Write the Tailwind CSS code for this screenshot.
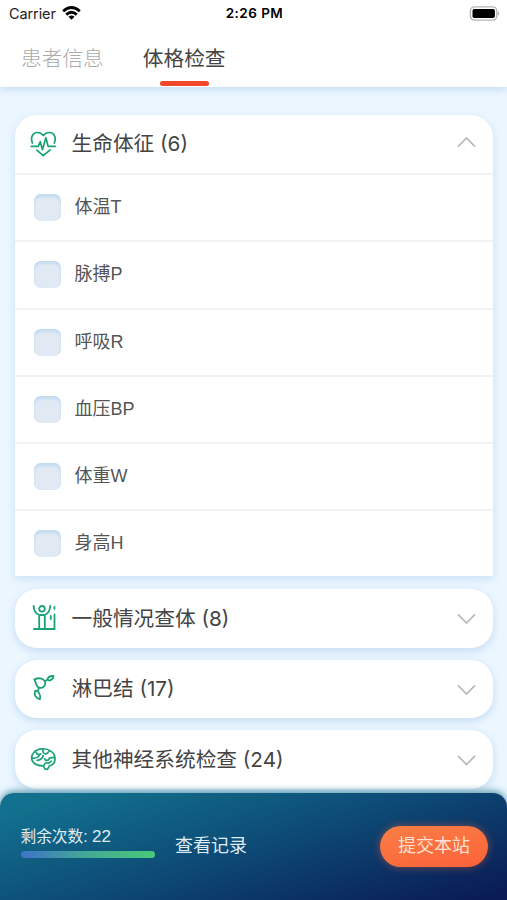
<!DOCTYPE html>
<html lang="zh-CN">
<head>
<meta charset="utf-8">
<title>体格检查</title>
<script src="https://cdn.jsdelivr.net/npm/@tailwindcss/browser@4"></script>
</head>
<body class="bg-[#ebf6ff] font-['Liberation_Sans','Noto_Sans_CJK_SC',sans-serif]">
<div class="relative flex h-[900px] w-[507px] flex-col overflow-hidden bg-[#ebf6ff] text-[#444]">
  <header class="h-[87px] shrink-0 bg-white shadow-[0_3px_7px_#c8def2]">
    <div class="grid h-7 grid-cols-3 items-center pl-[9px] pr-[7px] font-['Inter',sans-serif] text-black">
      <div class="flex items-center gap-[6px] text-[14.5px] leading-none tracking-[-0.1px] text-[#222]">
        <span>Carrier</span>
        <svg class="h-[14px] w-[19px] -translate-y-px" viewBox="0 0 19 14" fill="none" stroke="#000" stroke-width="2.8"><path d="M1.2 5.2Q9.5-2.2 17.8 5.2M4.2 8.6Q9.5 4 14.8 8.6"/><path d="M6.5 10.7Q9.5 8.2 12.5 10.7L9.5 13.7Z" fill="#000" stroke="none"/></svg>
      </div>
      <span class="text-center text-[13.5px] font-semibold leading-none tracking-[0.45px]">2:26 PM</span>
      <svg class="h-[15px] w-[31px] -translate-y-px justify-self-end" viewBox="0 0 31 15"><rect x="1.4" y=".9" width="26.4" height="13.2" rx="4" fill="none" stroke="#b5b5b5" stroke-width="1.4"/><rect x="3.5" y="3" width="22.4" height="9" rx="1.8"/><path d="M29 5.2Q31.4 7.5 29 9.8Z" fill="#aaa"/></svg>
    </div>
    <nav class="flex gap-[39px] pl-[21px] text-[20.7px] font-light">
      <div class="flex h-[58px] flex-col items-center pt-[16px] leading-[30px] text-[#aaa]">患者信息</div>
      <div class="flex h-[58px] flex-col items-center pt-[16px] font-normal leading-[30px] text-[#444]">
        <span>体格检查</span>
        <span class="mt-[7px] h-[5px] w-[49px] rounded-full bg-[#f2472b]"></span>
      </div>
    </nav>
  </header>

  <main class="flex flex-col gap-3 px-[14.5px] pt-[28px] text-[20.7px]">
    <section class="h-[461px] shrink-0 rounded-t-[22px] bg-white shadow-[0_3px_8px_#cbe1f6]">
      <div class="flex h-[58px] items-center pl-[15.5px] pr-[17px]">
        <svg class="h-[27px] w-[27px]" viewBox="0 0 27 27" fill="none" stroke="#19a277" stroke-width="1.7" stroke-linejoin="round" stroke-linecap="round"><path d="M2.4 12C-.2 5.3 3.7 1.5 7.5 1.5c2.8 0 4.3 1 5.8 3 1.7-2 3.3-3 6-3C23.3 1.5 27 5.5 24.3 12M1.2 15.3h7l2.1-4.7 2.1 8.1 3.5-12 2.2 8.6h7.2M6.8 19.2l6.4 5.4 7-5.8"/></svg>
        <h2 class="ml-[14.5px] flex-1 font-['Inter','Noto_Sans_CJK_SC',sans-serif]">生命体征 (6)</h2>
        <svg class="h-[12px] w-[19px] -translate-y-[2px]" viewBox="0 0 19 12" fill="none" stroke="#b9b9b9" stroke-width="1.7"><path d="M1 10.6 9.5 2 18 10.6"/></svg>
      </div>
      <ul class="text-[18px] text-[#555]">
        <li class="flex h-[67.3px] items-center gap-[14px] border-t-2 border-[#f3f3f3] pl-[19px]"><i class="h-[27px] w-[27px] rounded-[7px] bg-[#e1eaf4] shadow-[inset_0_3px_3px_#c3dbf1,inset_0_0_2px_#d8e6f4]"></i><span>体温T</span></li>
        <li class="flex h-[67.3px] items-center gap-[14px] border-t-2 border-[#f3f3f3] pl-[19px]"><i class="h-[27px] w-[27px] rounded-[7px] bg-[#e1eaf4] shadow-[inset_0_3px_3px_#c3dbf1,inset_0_0_2px_#d8e6f4]"></i><span>脉搏P</span></li>
        <li class="flex h-[67.3px] items-center gap-[14px] border-t-2 border-[#f3f3f3] pl-[19px]"><i class="h-[27px] w-[27px] rounded-[7px] bg-[#e1eaf4] shadow-[inset_0_3px_3px_#c3dbf1,inset_0_0_2px_#d8e6f4]"></i><span>呼吸R</span></li>
        <li class="flex h-[67.3px] items-center gap-[14px] border-t-2 border-[#f3f3f3] pl-[19px]"><i class="h-[27px] w-[27px] rounded-[7px] bg-[#e1eaf4] shadow-[inset_0_3px_3px_#c3dbf1,inset_0_0_2px_#d8e6f4]"></i><span>血压BP</span></li>
        <li class="flex h-[67.3px] items-center gap-[14px] border-t-2 border-[#f3f3f3] pl-[19px]"><i class="h-[27px] w-[27px] rounded-[7px] bg-[#e1eaf4] shadow-[inset_0_3px_3px_#c3dbf1,inset_0_0_2px_#d8e6f4]"></i><span>体重W</span></li>
        <li class="flex h-[66.5px] items-center gap-[14px] border-t-2 border-[#f3f3f3] pl-[19px]"><i class="h-[27px] w-[27px] rounded-[7px] bg-[#e1eaf4] shadow-[inset_0_3px_3px_#c3dbf1,inset_0_0_2px_#d8e6f4]"></i><span>身高H</span></li>
      </ul>
    </section>

    <section class="mt-px flex h-[58.5px] shrink-0 items-center rounded-[22px] bg-white pl-[15.5px] pr-[17px] shadow-[0_3px_8px_#c5dcf3]">
      <svg class="h-[27px] w-[27px] -translate-y-px" viewBox="0 0 27 27" fill="none" stroke="#19a277" stroke-width="1.8" stroke-linecap="round"><circle cx="12" cy="4.8" r="2.8"/><path d="M3.6 1.8c.2 5.2 2 8 5.6 9.2h5.6c3.4-1.2 5.2-4 5.4-9.2M9.2 11v14M14.8 11v14M4 25h20.5V10.5M24.4 2.8v2M20.8 12v3"/></svg>
      <h2 class="ml-[14.5px] flex-1 font-['Inter','Noto_Sans_CJK_SC',sans-serif]">一般情况查体 (8)</h2>
      <svg class="h-[12px] w-[19px] translate-y-px" viewBox="0 0 19 12" fill="none" stroke="#b9b9b9" stroke-width="1.7"><path d="M1 1.4 9.5 10 18 1.4"/></svg>
    </section>

    <section class="flex h-[58.5px] shrink-0 items-center rounded-[22px] bg-white pl-[15.5px] pr-[17px] shadow-[0_3px_8px_#c5dcf3]">
      <svg class="h-[27px] w-[27px] -translate-y-px" viewBox="0 0 27 27" fill="none" stroke="#19a277" stroke-width="1.8" stroke-linejoin="round"><path d="M4.4 5.4c2.8-1.2 6.6-1.6 8.9.2 2 1.6 2.4 4.2 1.2 6.2-1.4 2.4-4.5 2.8-6.6 1.2C5.7 11.3 5.8 8 4.4 5.4ZM17.2 5.8c.8-2.6 3-4 6.3-3.8-.2 3.4-3.3 5.6-6.3 3.8ZM14.6 7.4l2.6-1.6M9 13.8l-1.2 3M5.2 16.6c3.4.2 5.6 3.6 4.8 8.6-4-.8-6.4-4.2-4.8-8.6Z"/></svg>
      <h2 class="ml-[14.5px] flex-1 font-['Inter','Noto_Sans_CJK_SC',sans-serif]">淋巴结 (17)</h2>
      <svg class="h-[12px] w-[19px] translate-y-px" viewBox="0 0 19 12" fill="none" stroke="#b9b9b9" stroke-width="1.7"><path d="M1 1.4 9.5 10 18 1.4"/></svg>
    </section>

    <section class="flex h-[58.5px] shrink-0 items-center rounded-[22px] bg-white pl-[15.5px] pr-[17px] shadow-[0_3px_8px_#c5dcf3]">
      <svg class="h-[27px] w-[27px]" viewBox="0 0 27 27" fill="none" stroke="#19a277" stroke-width="1.7" stroke-linejoin="round" stroke-linecap="round"><path d="M2 14C.4 8.5 5 3.2 12 2.8c7-.4 13.2 4 13 10 0 4-2.2 6.4-5.6 7.2l-2 3.4-2.7-.6-1.2-3C9 20 3.2 18.4 2 14ZM2.8 12c2.6.8 4.6-.2 6.4-2.2M6.2 6.6c.8 2 2.8 2.4 4.6 1.4M13.4 3.4c-1.3 3.2.6 5 3.4 4.2l2.8-2.6M13.2 9.5c-.6 3-2 4.4-6 4.8M14.6 13c1.5 2.4 4.2 1.6 4.8-.8l4.6-.8M14.2 19c.2-2 2.6-2.8 4.6-1.8l2.6-2"/></svg>
      <h2 class="ml-[14.5px] flex-1 font-['Inter','Noto_Sans_CJK_SC',sans-serif]">其他神经系统检查 (24)</h2>
      <svg class="h-[12px] w-[19px] translate-y-[1.5px]" viewBox="0 0 19 12" fill="none" stroke="#b9b9b9" stroke-width="1.7"><path d="M1 1.4 9.5 10 18 1.4"/></svg>
    </section>
  </main>

  <footer class="absolute inset-x-0 bottom-0 flex h-[107.5px] items-center rounded-t-[14px] bg-[linear-gradient(163deg,#12718e_8%,#0d4a75_50%,#0a1b55_97%)] pl-[20.5px] pr-[19px] text-[18px] text-[#dfecf5] shadow-[0_-2px_7px_#5b98ad]">
    <div class="w-[134.5px] pb-[8px]">
      <p class="text-[15.7px] leading-5">剩余次数: <span class="text-[17px]">22</span></p>
      <div class="mt-[4px] h-[7px] rounded-full bg-[linear-gradient(90deg,#3f73c8,#44aa93_50%,#48c878)]"></div>
    </div>
    <span class="ml-[20px] flex-1">查看记录</span>
    <button class="flex h-[41px] w-[108px] items-center justify-center rounded-full bg-[linear-gradient(170deg,#f97e45,#fc6239)] text-[#ffe0d2] shadow-[0_0_8px_#f8683c77]">提交本站</button>
  </footer>
</div>
</body>
</html>
